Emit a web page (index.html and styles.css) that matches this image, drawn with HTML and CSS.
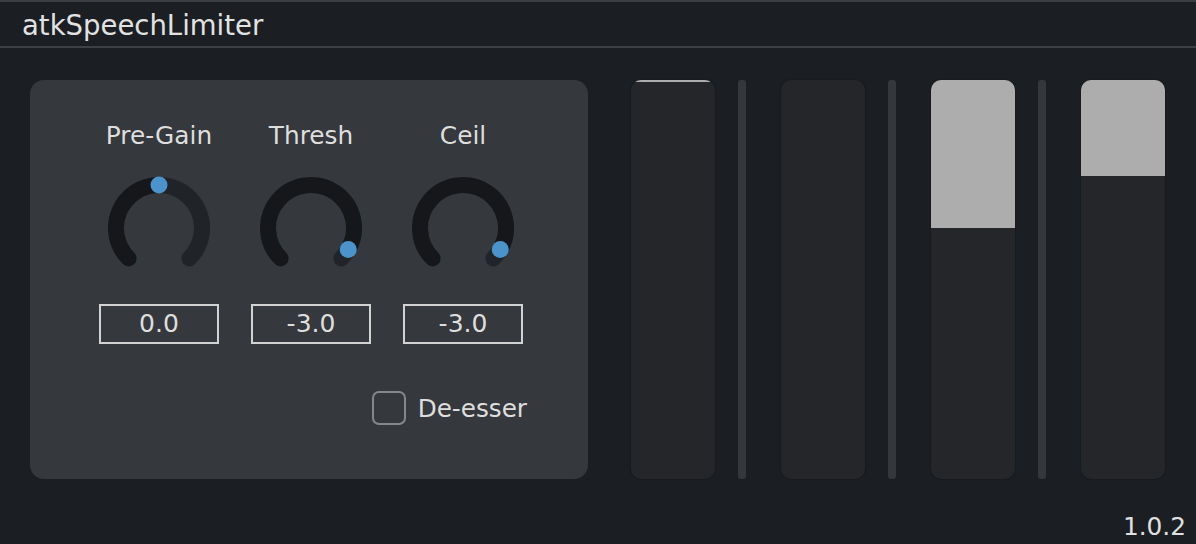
FILE: index.html
```html
<!DOCTYPE html>
<html lang="en">
<head>
    <meta charset="UTF-8">
    <title>atkSpeechLimiter</title>
    <link rel="stylesheet" href="styles.css">
</head>
<body>

<div class="titlebar">atkSpeechLimiter</div>

<div class="main">
    <div class="panel">
        <div class="knobs">
            <div class="control">
                <div class="label">Pre-Gain</div>
                <svg class="knob" width="120" height="110" viewBox="0 0 120 110">
                    <path class="track" d="M60 12 A43 43 0 0 1 90.41 85.41"/>
                    <path class="value" d="M29.59 85.41 A43 43 0 0 1 60 12"/>
                    <circle class="dot" cx="60" cy="12" r="8.5"/>
                </svg>
                <div class="valuebox">0.0</div>
            </div>
            <div class="control">
                <div class="label">Thresh</div>
                <svg class="knob" width="120" height="110" viewBox="0 0 120 110">
                    <path class="track" d="M97.24 76.5 A43 43 0 0 1 90.41 85.41"/>
                    <path class="value" d="M29.59 85.41 A43 43 0 1 1 97.24 76.5"/>
                    <circle class="dot" cx="97.24" cy="76.5" r="8.5"/>
                </svg>
                <div class="valuebox">-3.0</div>
            </div>
            <div class="control">
                <div class="label">Ceil</div>
                <svg class="knob" width="120" height="110" viewBox="0 0 120 110">
                    <path class="track" d="M97.24 76.5 A43 43 0 0 1 90.41 85.41"/>
                    <path class="value" d="M29.59 85.41 A43 43 0 1 1 97.24 76.5"/>
                    <circle class="dot" cx="97.24" cy="76.5" r="8.5"/>
                </svg>
                <div class="valuebox">-3.0</div>
            </div>
        </div>
        <label class="check">
            <span class="box"></span>
            <span>De-esser</span>
        </label>
    </div>

    <div class="meters">
        <div class="meter"><div class="fill" style="height: 2px"></div></div>
        <div class="slot"></div>
        <div class="meter"><div class="fill" style="height: 0px"></div></div>
        <div class="slot"></div>
        <div class="meter"><div class="fill" style="height: 148px"></div></div>
        <div class="slot"></div>
        <div class="meter"><div class="fill" style="height: 96px"></div></div>
    </div>
</div>

<div class="version">1.0.2</div>

</body>
</html>
```

FILE: styles.css
```css
body {
    margin: 0;
    background: #1b1e22;
    font-family: "DejaVu Sans", Verdana, sans-serif;
    color: #dedede;
    width: 1196px;
    height: 544px;
    overflow: hidden;
}
.titlebar {
    border-top: 2px solid #3a3d42;
    border-bottom: 2px solid #3d4045;
    height: 44px;
    line-height: 46px;
    padding-left: 22px;
    font-size: 27.5px;
    color: #e2e2e2;
}
.main {
    display: flex;
    padding: 32px 0 0 30px;
}
.panel {
    width: 558px;
    height: 399px;
    background: #35383c;
    border-radius: 14px;
    box-sizing: border-box;
    padding: 41px 61px 0 69px;
}
.knobs {
    display: flex;
    gap: 32px;
}
.control {
    width: 120px;
    display: flex;
    flex-direction: column;
    align-items: center;
}
.label {
    height: 30px;
    line-height: 30px;
    font-size: 24.8px;
    white-space: nowrap;
}
.knob {
    display: block;
    margin-top: 22px;
}
.knob path {
    fill: none;
    stroke-width: 16;
    stroke-linecap: round;
}
.knob .track {
    stroke: #202327;
}
.knob .value {
    stroke: #15171a;
}
.knob .dot {
    fill: #4b94cb;
}
.valuebox {
    margin-top: 21px;
    width: 120px;
    height: 40px;
    box-sizing: border-box;
    border: 2px solid #d2d2d2;
    text-align: center;
    line-height: 36px;
    font-size: 25px;
}
.check {
    display: flex;
    justify-content: flex-end;
    align-items: center;
    gap: 12px;
    margin-top: 47px;
    font-size: 24.7px;
}
.check .box {
    width: 34px;
    height: 34px;
    box-sizing: border-box;
    border: 2px solid #85888b;
    border-radius: 7px;
}
.meters {
    display: flex;
    margin-left: 43px;
    height: 399px;
}
.meter {
    width: 84px;
    background: #252629;
    border-radius: 10px;
    overflow: hidden;
    box-shadow: 0 0 2px rgba(0, 0, 0, 0.4);
}
.fill {
    background: #adadad;
}
.slot {
    width: 8px;
    background: #34373b;
    border-radius: 3px;
    margin: 0 35px 0 23px;
}
.version {
    position: absolute;
    right: 10px;
    bottom: 3px;
    font-size: 24.8px;
    color: #e0e0e0;
}
```
